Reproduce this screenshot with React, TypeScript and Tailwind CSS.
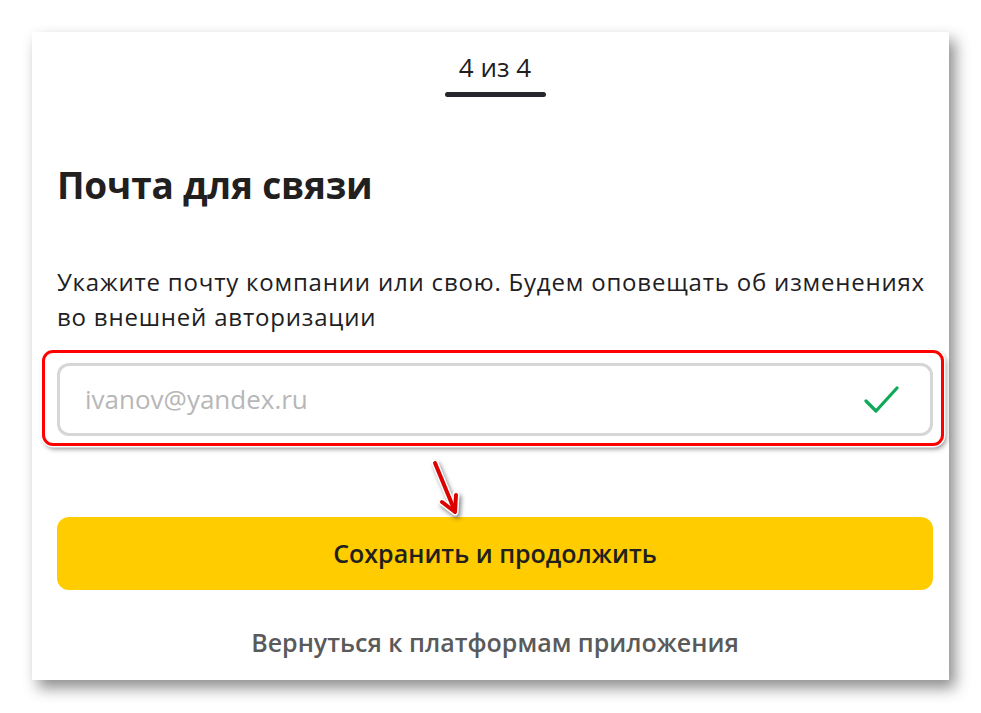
import React from 'react';

export default function App() {
  return (
    <div className="w-[981px] h-[713px] bg-white pt-[32px] pl-[32px]" style={{ fontFamily: '"Open Sans", "Noto Sans", sans-serif' }}>
      <div className="w-[917px] h-[648px] bg-white shadow-[6px_8px_14px_rgba(0,0,0,0.45)] flex flex-col px-[25px] pr-[16px]">
        {/* Step indicator */}
        <div className="flex flex-col items-center pt-[17px]">
          <span className="text-[26px] leading-[36px] text-[#21201f] font-normal">4 из 4</span>
          <div className="mt-[7px] w-[101px] h-[5px] rounded-full bg-[#26262f]" />
        </div>

        <h1 className="mt-[66px] text-[37px] leading-[44px] font-bold text-[#21201f] tracking-[-0.2px]">Почта для связи</h1>

        <p className="mt-[57px] text-[24px] leading-[35px] tracking-[0.8px] text-[#21201f]">
          Укажите почту компании или свою. Будем оповещать об изменениях во внешней авторизации
        </p>

        {/* Input with annotation frame */}
        <div className="relative mt-[29px]">
          <div className="absolute -left-[15px] -top-[13px] w-[902px] h-[96px] rounded-[11px] border-[3px] border-[#ff0000] shadow-[0_0_0_1.5px_#fff,2px_3px_5px_rgba(0,0,0,0.45)]" />
          <div className="w-[876px] h-[73px] rounded-[12px] border-[3px] border-[#d6d6d6] bg-white flex items-center justify-between pl-[25px] pr-[30px]">
            <span className="text-[26px] text-[#b7b7b7]">ivanov@yandex.ru</span>
            <svg width="36" height="30" viewBox="0 0 36 30" fill="none">
              <path d="M2 16 L12 26 L33 3" stroke="#0fa958" strokeWidth="3.2" strokeLinecap="round" strokeLinejoin="round" />
            </svg>
          </div>
        </div>

        {/* Arrow annotation */}
        <div className="relative h-[81px]">
          <svg className="absolute left-[371px] top-[24px]" width="40" height="60" viewBox="0 0 40 60" fill="none" style={{ filter: 'drop-shadow(2px 3px 2px rgba(0,0,0,0.45))' }}>
            <path d="M7 3 L26 49" stroke="#fff" strokeWidth="7" strokeLinecap="round" />
            <path d="M14 42 L27 52 L28 35" stroke="#fff" strokeWidth="7" strokeLinecap="round" strokeLinejoin="round" />
            <path d="M7 3 L26 49" stroke="#dd0000" strokeWidth="4" strokeLinecap="round" />
            <path d="M14 42 L27 52 L28 35" stroke="#dd0000" strokeWidth="4" strokeLinecap="round" strokeLinejoin="round" />
          </svg>
        </div>

        <button className="w-[876px] h-[73px] rounded-[12px] bg-[#ffcc00] text-[25px] font-semibold text-[#21201f]">
          Сохранить и продолжить
        </button>

        <div className="mt-[34px] text-center text-[25px] font-semibold text-[#5a5a5a] w-[876px]">
          Вернуться к платформам приложения
        </div>
      </div>
    </div>
  );
}
